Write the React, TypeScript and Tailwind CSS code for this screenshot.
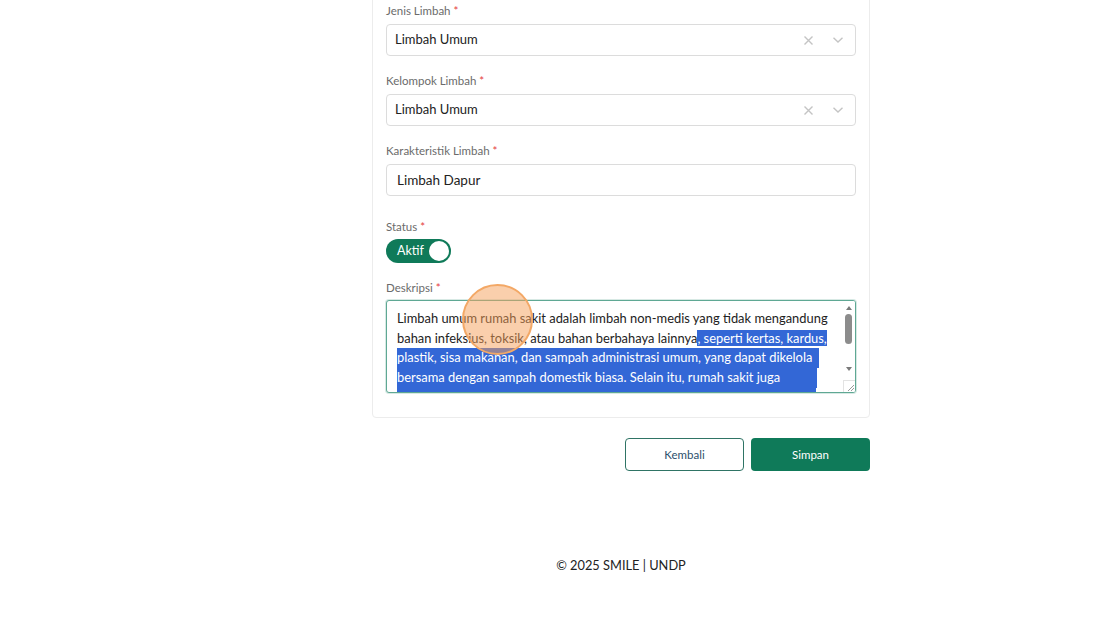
import React from "react";

const Req = () => <span className="text-[#e53e3e]"> *</span>;

function Label({ children }: { children: React.ReactNode }) {
  return (
    <div className="text-[11.5px] leading-[16px] text-[#6b6b6b]">
      {children}
      <Req />
    </div>
  );
}

function SelectBox({ value }: { value: string }) {
  return (
    <div className="mt-[5px] flex h-[32px] items-center rounded-[4px] border border-[#dcdcdc] bg-white pl-[8px] pr-[8px]">
      <div className="flex-1 text-[13px] text-[#222]">{value}</div>
      <svg width="11" height="11" viewBox="0 0 11 11" className="mr-[18px]">
        <path d="M1.5 1.5 L9.5 9.5 M9.5 1.5 L1.5 9.5" stroke="#c4c4c4" strokeWidth="1.4" />
      </svg>
      <svg width="12" height="8" viewBox="0 0 12 8" className="mr-[3px]">
        <path d="M1.5 1.8 L6 6 L10.5 1.8" stroke="#c4c4c4" strokeWidth="1.4" fill="none" />
      </svg>
    </div>
  );
}

export default function App() {
  const sel = "bg-[#3367d6] text-white";
  return (
    <div
      className="relative h-[627px] w-[1120px] overflow-hidden bg-white"
      style={{ fontFamily: "Lato, 'Noto Sans', Arial, sans-serif" }}
    >
      <div className="flex">
        <div className="w-[122px] shrink-0" />
        <div className="flex flex-1 flex-col items-center">
          <div className="w-[498px]">
            <div className="-mt-[20px] rounded-[4px] border border-[#ececec] bg-white px-[13px] pb-[24px] pt-[22px]">
              <Label>Jenis Limbah</Label>
              <SelectBox value="Limbah Umum" />

              <div className="mt-[17px]">
                <Label>Kelompok Limbah</Label>
              </div>
              <SelectBox value="Limbah Umum" />

              <div className="mt-[17px]">
                <Label>Karakteristik Limbah</Label>
              </div>
              <div className="mt-[5px] flex h-[32px] items-center rounded-[4px] border border-[#dcdcdc] bg-white pl-[10px] text-[13.5px] text-[#222]">
                Limbah Dapur
              </div>

              <div className="mt-[23px]">
                <Label>Status</Label>
              </div>
              <div className="mt-[4px] flex h-[24px] w-[65px] items-center justify-between rounded-full bg-[#0f7a59] pl-[11px] pr-[2px]">
                <span className="text-[12.5px] text-white">Aktif</span>
                <span className="h-[20px] w-[20px] rounded-full bg-white" />
              </div>

              <div className="mt-[17px]">
                <Label>Deskripsi</Label>
              </div>
              <div className="relative mt-[4px] h-[93px] overflow-hidden rounded-[3px] border border-[#5fa894] bg-white shadow-[0_0_0_1px_rgba(95,168,148,0.25)]">
                <div className="pl-[10px] pt-[8px] text-[12.9px] leading-[19.7px] text-[#222]">
                  <div className="whitespace-nowrap">
                    Limbah umum rumah sakit adalah limbah non-medis yang tidak mengandung
                  </div>
                  <div className="whitespace-nowrap">
                    bahan infeksius, toksik, atau bahan berbahaya lainnya
                    <span className={sel}>, seperti kertas, kardus, </span>
                  </div>
                  <div className="whitespace-nowrap">
                    <span className={`${sel} inline-block w-[422px]`}>
                      plastik, sisa makanan, dan sampah administrasi umum, yang dapat dikelola
                    </span>
                  </div>
                  <div className="whitespace-nowrap">
                    <span className={`${sel} inline-block w-[420px]`}>
                      bersama dengan sampah domestik biasa. Selain itu, rumah sakit juga
                    </span>
                  </div>
                  <div className="whitespace-nowrap">
                    <span className={`${sel} inline-block w-[419px]`}>
                      menghasilkan limbah dari kegiatan dapur, taman, dan perkantoran
                    </span>
                  </div>
                </div>
                {/* scrollbar */}
                <div className="absolute right-0 top-0 flex h-full w-[13px] flex-col items-center bg-white">
                  <svg width="8" height="6" viewBox="0 0 8 6" className="mt-[4px]">
                    <path d="M4 1 L7 5 L1 5 Z" fill="#7a7a7a" />
                  </svg>
                  <div className="mt-[3px] h-[30px] w-[7px] rounded-full bg-[#8c8c8c]" />
                  <svg width="8" height="6" viewBox="0 0 8 6" className="mt-[22px]">
                    <path d="M1 1 L7 1 L4 5 Z" fill="#7a7a7a" />
                  </svg>
                </div>
                <div className="absolute bottom-0 right-0 h-[12px] w-[12px] border-l border-t border-[#e3e3e3] bg-white">
                  <svg width="11" height="11" viewBox="0 0 11 11">
                    <path d="M10 4 L4 10 M10 7 L7 10" stroke="#9a9a9a" strokeWidth="1" />
                  </svg>
                </div>
              </div>
            </div>

            <div className="mt-[20px] flex justify-end gap-[7px]">
              <button className="h-[33px] w-[119px] rounded-[4px] border border-[#2f7465] bg-white text-[11.5px] text-[#2d4f6c]">
                Kembali
              </button>
              <button className="h-[33px] w-[119px] rounded-[4px] bg-[#0f7a59] text-[11.5px] text-white">
                Simpan
              </button>
            </div>
          </div>

          <div className="mt-[85px] text-[12.8px] text-[#222]">© 2025 SMILE | UNDP</div>
        </div>
      </div>

      {/* cursor highlight */}
      <div className="pointer-events-none absolute left-[462px] top-[284px] h-[71px] w-[71px] rounded-full border-2 border-[#f3a866] bg-[rgba(245,160,90,0.5)]" />
    </div>
  );
}
